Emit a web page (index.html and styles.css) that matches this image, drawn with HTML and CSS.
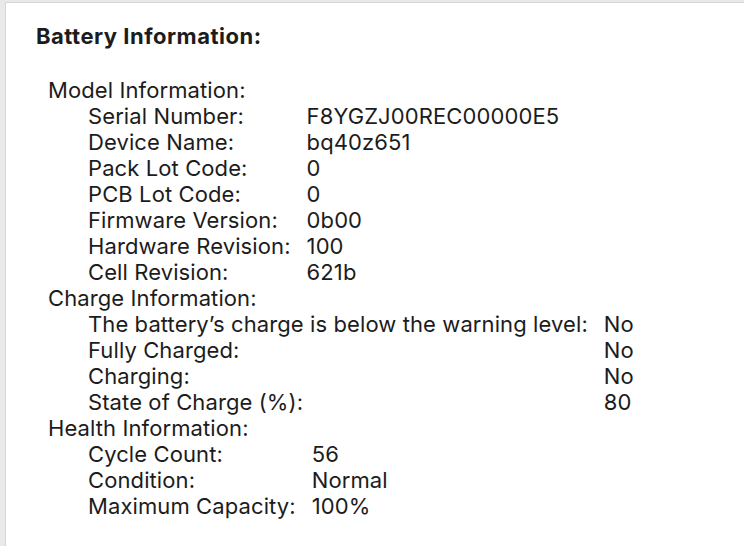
FILE: index.html
```html
<!DOCTYPE html>
<html>
<head>
<meta charset="utf-8">
<link rel="stylesheet" href="styles.css">
</head>
<body>
<div class="frame">
  <div class="pane">
    <h1 class="title">Battery Information:</h1>
    <div class="section">
      <div class="section-title">Model Information:</div>
      <div class="rows">
        <span>Serial Number:</span><span>F8YGZJ00REC00000E5</span>
        <span>Device Name:</span><span>bq40z651</span>
        <span>Pack Lot Code:</span><span>0</span>
        <span>PCB Lot Code:</span><span>0</span>
        <span>Firmware Version:</span><span>0b00</span>
        <span>Hardware Revision:</span><span>100</span>
        <span>Cell Revision:</span><span>621b</span>
      </div>
    </div>
    <div class="section">
      <div class="section-title">Charge Information:</div>
      <div class="rows">
        <span>The battery’s charge is below the warning level:</span><span>No</span>
        <span>Fully Charged:</span><span>No</span>
        <span>Charging:</span><span>No</span>
        <span>State of Charge (%):</span><span>80</span>
      </div>
    </div>
    <div class="section">
      <div class="section-title">Health Information:</div>
      <div class="rows">
        <span>Cycle Count:</span><span>56</span>
        <span>Condition:</span><span>Normal</span>
        <span>Maximum Capacity:</span><span>100%</span>
      </div>
    </div>
  </div>
</div>
</body>
</html>
```
FILE: styles.css
```css
html, body {
  margin: 0;
  padding: 0;
  height: 100%;
}
body {
  background: #e9e9e9;
  padding: 2px 0 0 5px;
  box-sizing: border-box;
  font-family: Inter, "Liberation Sans", sans-serif;
  color: #1c1c1c;
  overflow: hidden;
}
.frame {
  background: #ffffff;
  border-left: 1px solid #d6d6d6;
  border-top: 1px solid #d6d6d6;
  height: 100%;
  box-sizing: border-box;
}
.pane {
  padding: 20px 0 0 30px;
  font-size: 22px;
  line-height: 26px;
  letter-spacing: 0.1px;
}
.title {
  margin: 0 0 28px 0;
  font-size: 22px;
  font-weight: 700;
  line-height: 26px;
  letter-spacing: 0.5px;
}
.section {
  padding-left: 12px;
}
.rows {
  display: grid;
  grid-template-columns: max-content max-content;
  column-gap: 16px;
  padding-left: 40px;
}
```
